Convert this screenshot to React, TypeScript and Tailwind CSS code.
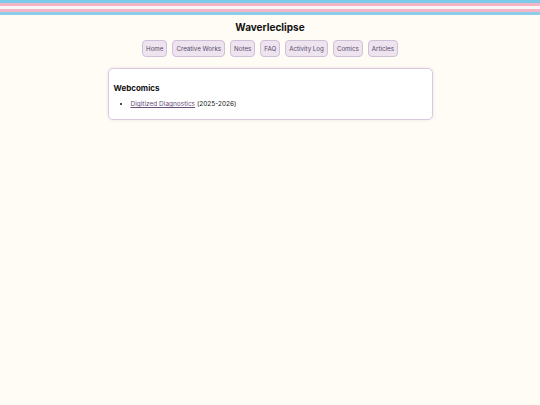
const links = ["Home", "Creative Works", "Notes", "FAQ", "Activity Log", "Comics", "Articles"];

export default function App() {
  return (
    <div className="min-h-[405px] bg-[#fffbf5] font-['Inter',sans-serif] text-[#111]">
      {/* flag stripe */}
      <div className="flex flex-col">
        <div className="h-[3px] bg-[#7ccbea]" />
        <div className="h-[3px] bg-[#f3b6c6]" />
        <div className="h-[3px] bg-[#fdf6f8]" />
        <div className="h-[3px] bg-[#f3b6c6]" />
        <div className="h-[3px] bg-[#8ccdea]" />
      </div>

      <header className="flex flex-col items-center pt-[5px]">
        <h1 className="text-[10px] font-bold leading-[14px]">Waverleclipse</h1>
        <nav className="mt-[6px] flex gap-[5px]">
          {links.map((l) => (
            <a
              key={l}
              className="rounded-[4px] border border-[#cfc0d8] bg-[#ede4ef] px-[3px] py-[3px] text-[6.2px] leading-[9px] text-[#5a4868]"
            >
              {l}
            </a>
          ))}
        </nav>
      </header>

      <main className="mx-auto mt-[11px] w-[325px] rounded-[5px] border-[1.5px] border-[#d8cbe0] bg-white px-[5px] pb-[10px] pt-[13px] shadow-[0_0_3px_rgba(120,90,140,0.15)]">
        <h2 className="text-[8px] font-bold leading-[12px]">Webcomics</h2>
        <ul className="mt-[5px] list-disc pl-[17px] text-[6.5px] leading-[10px]">
          <li>
            <a className="text-[#6a5078] underline">Digitized Diagnostics</a> (2025-2026)
          </li>
        </ul>
      </main>
    </div>
  );
}
